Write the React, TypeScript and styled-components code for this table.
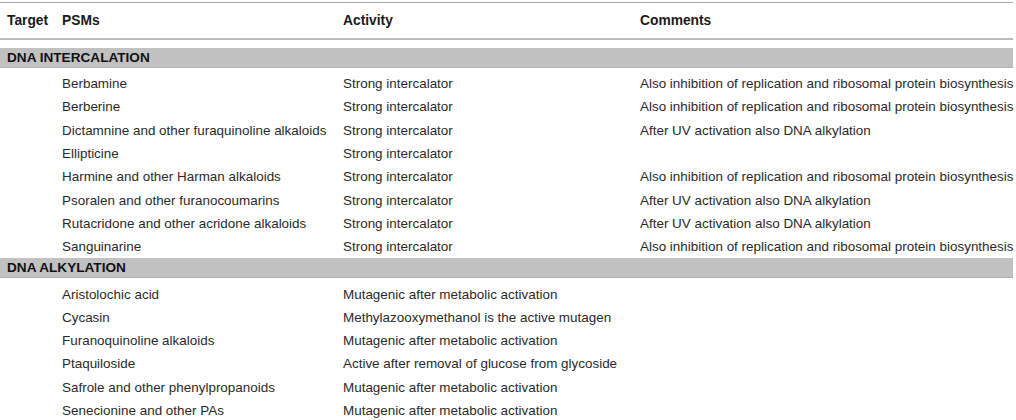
import React from "react";
import styled, { createGlobalStyle } from "styled-components";

const Global = createGlobalStyle`
  html, body { margin: 0; padding: 0; background: #ffffff; }
  body { font-family: "Liberation Sans", Arial, Helvetica, sans-serif; }
`;

const Page = styled.div`
  width: 1013px;
  padding-top: 2px;
`;

const Grid = styled.div`
  display: grid;
  grid-template-columns: 55px 281px 297px 380px;
`;

const HeaderRow = styled(Grid)`
  height: 35px;
  align-items: center;
  border-top: 1px solid #a9a9a9;
  border-bottom: 2px solid #bdbdbd;
  margin-bottom: 8px;
`;

const HeadCell = styled.div`
  padding-left: 7px;
  font-size: 13.8px;
  font-weight: bold;
  color: #1a1a1a;
  white-space: nowrap;
`;

const GroupBar = styled.div`
  height: 20px;
  display: flex;
  align-items: center;
  padding-left: 7px;
  background: #c1c1c1;
  border-bottom: 1px solid #b3b3b3;
  box-sizing: border-box;
  font-size: 13.6px;
  font-weight: bold;
  color: #111;
  white-space: nowrap;
`;

const Body = styled.div`
  padding-top: 4px;
`;

const Row = styled(Grid)`
  height: 23.3px;
  align-items: center;
`;

const Cell = styled.div`
  padding-left: 7px;
  font-size: 13.45px;
  color: #2a2a2a;
  white-space: nowrap;
`;

type R = [string, string, string];

const sections: { title: string; rows: R[] }[] = [
  {
    title: "DNA INTERCALATION",
    rows: [
      ["Berbamine", "Strong intercalator", "Also inhibition of replication and ribosomal protein biosynthesis"],
      ["Berberine", "Strong intercalator", "Also inhibition of replication and ribosomal protein biosynthesis"],
      ["Dictamnine and other furaquinoline alkaloids", "Strong intercalator", "After UV activation also DNA alkylation"],
      ["Ellipticine", "Strong intercalator", ""],
      ["Harmine and other Harman alkaloids", "Strong intercalator", "Also inhibition of replication and ribosomal protein biosynthesis"],
      ["Psoralen and other furanocoumarins", "Strong intercalator", "After UV activation also DNA alkylation"],
      ["Rutacridone and other acridone alkaloids", "Strong intercalator", "After UV activation also DNA alkylation"],
      ["Sanguinarine", "Strong intercalator", "Also inhibition of replication and ribosomal protein biosynthesis"],
    ],
  },
  {
    title: "DNA ALKYLATION",
    rows: [
      ["Aristolochic acid", "Mutagenic after metabolic activation", ""],
      ["Cycasin", "Methylazooxymethanol is the active mutagen", ""],
      ["Furanoquinoline alkaloids", "Mutagenic after metabolic activation", ""],
      ["Ptaquiloside", "Active after removal of glucose from glycoside", ""],
      ["Safrole and other phenylpropanoids", "Mutagenic after metabolic activation", ""],
      ["Senecionine and other PAs", "Mutagenic after metabolic activation", ""],
    ],
  },
];

export default function App() {
  return (
    <Page>
      <Global />
      <HeaderRow>
        <HeadCell>Target</HeadCell>
        <HeadCell>PSMs</HeadCell>
        <HeadCell>Activity</HeadCell>
        <HeadCell>Comments</HeadCell>
      </HeaderRow>
      {sections.map((s) => (
        <section key={s.title}>
          <GroupBar>{s.title}</GroupBar>
          <Body>
            {s.rows.map((r) => (
              <Row key={r[0]}>
                <Cell />
                <Cell>{r[0]}</Cell>
                <Cell>{r[1]}</Cell>
                <Cell>{r[2]}</Cell>
              </Row>
            ))}
          </Body>
        </section>
      ))}
    </Page>
  );
}
